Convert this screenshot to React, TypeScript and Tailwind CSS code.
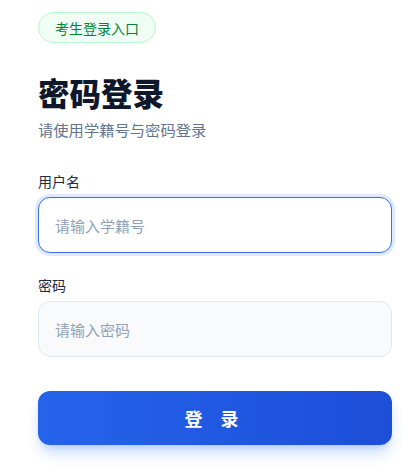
import React, { useState } from "react";

export default function App() {
  const [username, setUsername] = useState("");
  const [password, setPassword] = useState("");

  return (
    <div
      className="min-h-[469px] w-[414px] bg-white pl-[38px] pr-[22px] pt-3"
      style={{ fontFamily: '"Noto Sans CJK SC", "Noto Sans", sans-serif' }}
    >
      <span className="inline-flex h-[31px] items-center rounded-full border border-green-200 bg-green-50 px-4 text-sm text-green-700">
        考生登录入口
      </span>

      <h1 className="mt-[30px] text-[31.5px] font-extrabold leading-[38px] text-slate-900">
        密码登录
      </h1>
      <p className="mt-[7px] text-[15.3px] leading-[22px] text-slate-500">
        请使用学籍号与密码登录
      </p>

      <form className="mt-[31px]" onSubmit={(e) => e.preventDefault()}>
        <label className="mb-1.5 block text-sm leading-5 text-slate-800">用户名</label>
        <input
          autoFocus
          value={username}
          onChange={(e) => setUsername(e.target.value)}
          placeholder="请输入学籍号"
          className="block h-[56px] w-full rounded-xl border border-[#3b6fe0] bg-white px-4 text-[15px] text-slate-800 outline-none ring-[3px] ring-blue-100 placeholder:text-slate-400"
        />

        <label className="mb-1.5 mt-[22px] block text-sm leading-5 text-slate-800">密码</label>
        <input
          type="password"
          value={password}
          onChange={(e) => setPassword(e.target.value)}
          placeholder="请输入密码"
          className="block h-[56px] w-full rounded-xl border border-slate-200 bg-slate-50 px-4 text-[15px] text-slate-800 outline-none placeholder:text-slate-400"
        />

        <button
          type="submit"
          className="mt-[34px] h-[54px] w-full rounded-xl bg-gradient-to-r from-[#2563eb] to-[#1d4ed8] text-lg font-bold tracking-[7px] text-white shadow-lg shadow-blue-500/30"
        >
          登 录
        </button>
      </form>
    </div>
  );
}
